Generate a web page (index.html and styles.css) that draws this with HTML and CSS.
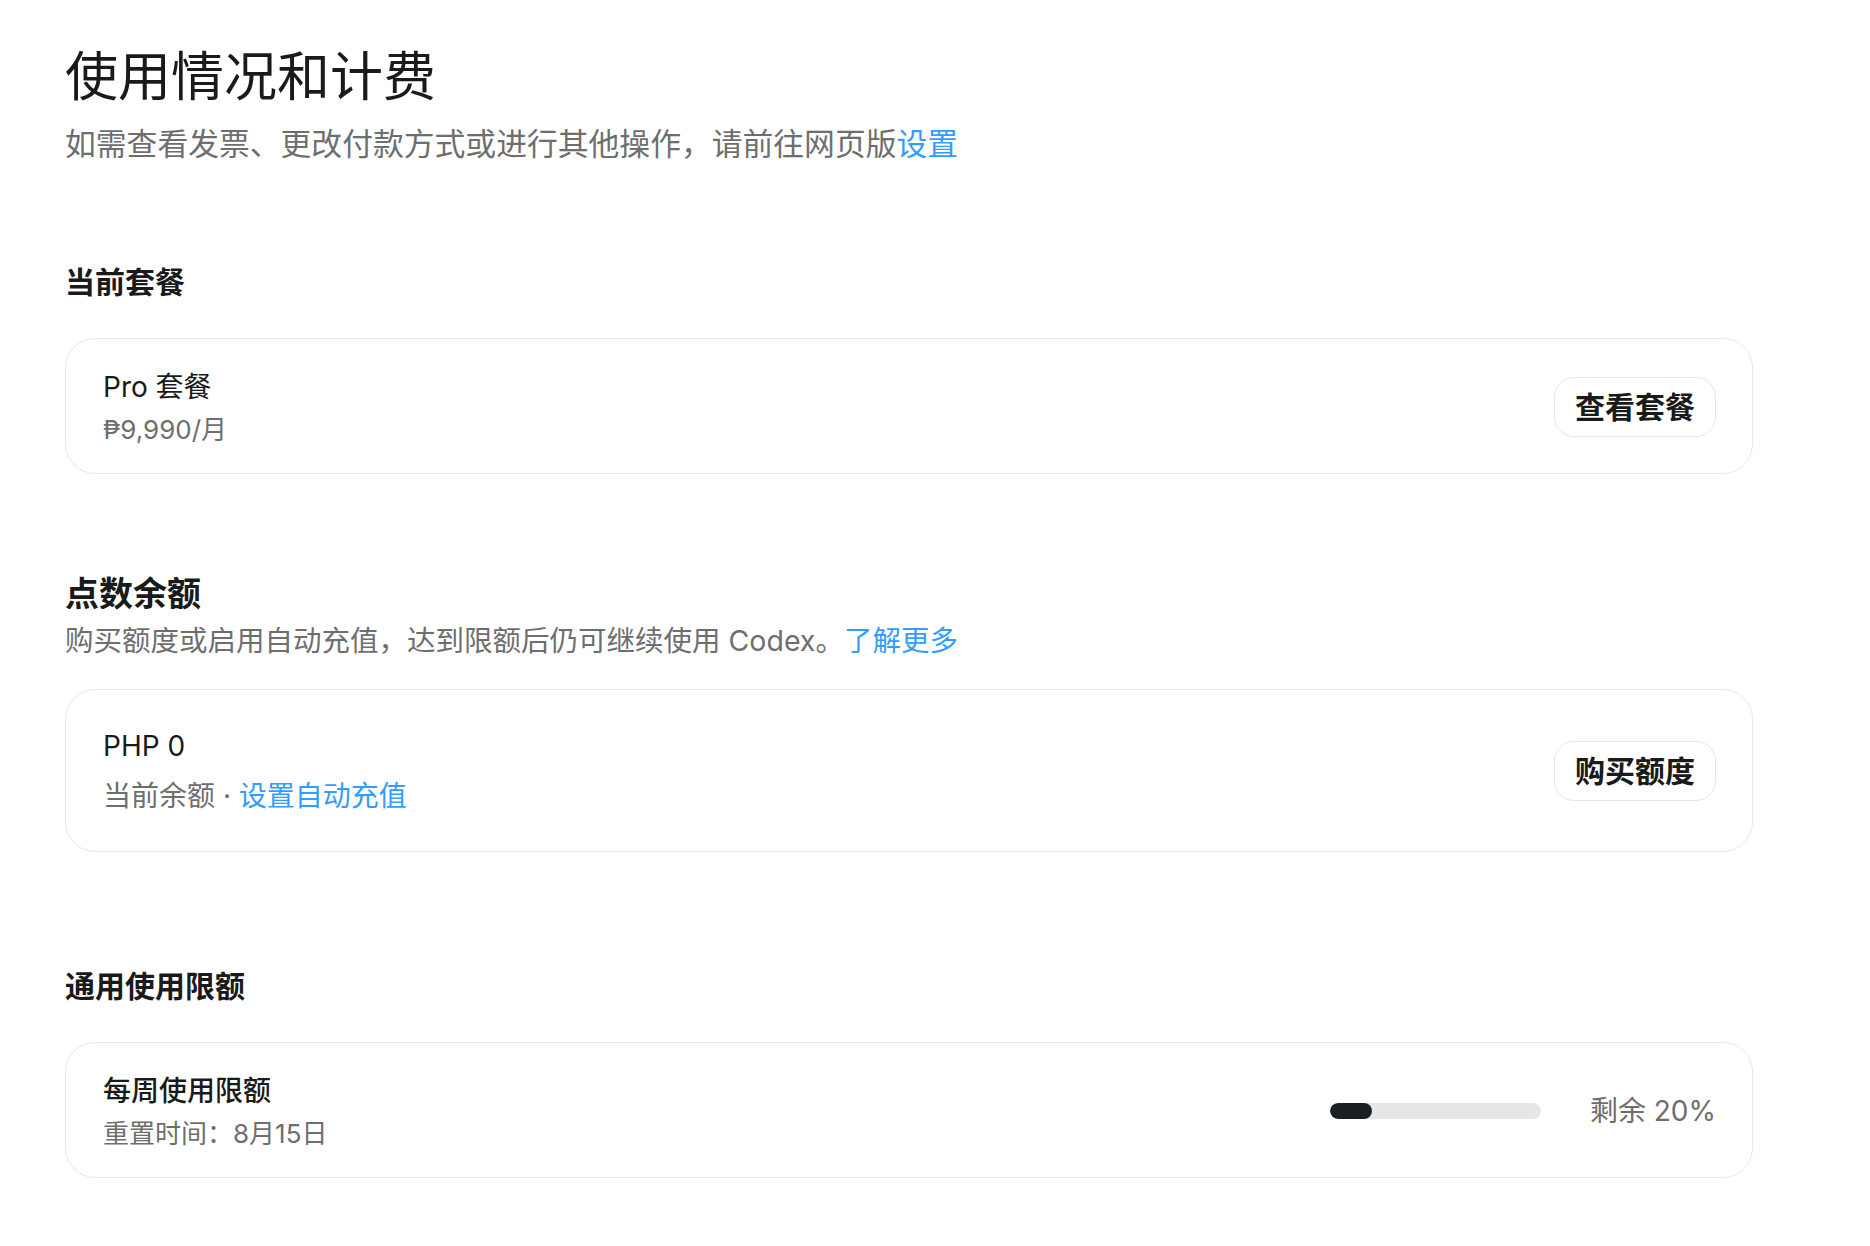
FILE: index.html
```html
<!DOCTYPE html>
<html lang="zh-CN">
<head>
  <meta charset="UTF-8" />
  <meta name="viewport" content="width=device-width, initial-scale=1.0"/>
  <title>使用情况和计费</title>
  <link rel="stylesheet" href="styles.css">
</head>
<body>
  <main class="page">
    <header class="page-header">
      <h1 class="page-title">使用情况和计费</h1>
      <p class="page-subtitle">如需查看发票、更改付款方式或进行其他操作，请前往网页版<a href="#">设置</a></p>
    </header>

    <section class="section">
      <h2 class="section-title">当前套餐</h2>
      <div class="card">
        <div class="card-info">
          <div class="card-title">Pro 套餐</div>
          <div class="card-meta">₱9,990/月</div>
        </div>
        <button class="btn">查看套餐</button>
      </div>
    </section>

    <section class="section">
      <h2 class="section-title section-title-lg">点数余额</h2>
      <p class="section-desc">购买额度或启用自动充值，达到限额后仍可继续使用 Codex。<a href="#">了解更多</a></p>
      <div class="card card-roomy">
        <div class="card-info">
          <div class="card-title">PHP 0</div>
          <div class="card-meta">当前余额 · <a href="#">设置自动充值</a></div>
        </div>
        <button class="btn">购买额度</button>
      </div>
    </section>

    <section class="section section-limits">
      <h2 class="section-title">通用使用限额</h2>
      <div class="card">
        <div class="card-info">
          <div class="card-title card-title-strong">每周使用限额</div>
          <div class="card-meta">重置时间：8月15日</div>
        </div>
        <div class="usage">
          <div class="usage-bar">
            <div class="usage-fill" style="width: 20%"></div>
          </div>
          <span class="usage-label">剩余 20%</span>
        </div>
      </div>
    </section>
  </main>
</body>
</html>
```

FILE: styles.css
```css
* {
  box-sizing: border-box;
}

body {
  margin: 0;
  background: #fff;
  color: #1a1a1a;
  font-family: Inter, "Noto Sans CJK SC", sans-serif;
}

a {
  color: #339cff;
  text-decoration: none;
}

.page {
  padding: 45px 117px 60px 65px;
}

.page-title {
  margin: 0;
  font-size: 53px;
  line-height: 64px;
  font-weight: 400;
}

.page-subtitle {
  margin: 15px 0 0;
  font-size: 30.8px;
  line-height: 40px;
  color: #6e6e6e;
}

.section {
  margin-top: 98px;
}

.section-limits {
  margin-top: 114px;
}

.section-title {
  margin: 0 0 36px;
  font-size: 30px;
  line-height: 40px;
  font-weight: 600;
}

.section-title-lg {
  margin-bottom: 0;
  font-size: 34px;
  line-height: 44px;
}

.section-desc {
  margin: 5px 0 28px;
  font-size: 28.5px;
  line-height: 40px;
  color: #6e6e6e;
}

/* cards */
.card {
  display: flex;
  align-items: center;
  justify-content: space-between;
  padding: 28px 36px 23px 37px;
  border: 1px solid #e8e8e8;
  border-radius: 30px;
}

.card-roomy {
  padding-top: 36px;
  padding-bottom: 35px;
}

.card-title {
  font-size: 28px;
  line-height: 40px;
}

.card-title-strong {
  font-weight: 500;
}

.card-meta {
  margin-top: 3px;
  font-size: 26px;
  line-height: 40px;
  color: #6e6e6e;
}

.card-roomy .card-meta {
  margin-top: 10px;
  font-size: 28px;
}

.btn {
  margin-bottom: 4px;
  padding: 9px 20px;
  border: 1px solid #e6e6e6;
  border-radius: 20px;
  background: #fff;
  color: #1a1a1a;
  font-family: inherit;
  font-size: 30px;
  line-height: 40px;
  font-weight: 600;
  cursor: pointer;
}

.card-roomy .btn {
  margin-bottom: 0;
}

/* usage meter */
.usage {
  display: flex;
  align-items: center;
  gap: 49px;
  margin-bottom: 3px;
}

.usage-bar {
  width: 211px;
  height: 16px;
  border-radius: 8px;
  background: #e6e6e6;
  overflow: hidden;
}

.usage-fill {
  height: 100%;
  border-radius: 8px;
  background: #1b1e22;
}

.usage-label {
  font-size: 28px;
  line-height: 40px;
  color: #6e6e6e;
}
```
